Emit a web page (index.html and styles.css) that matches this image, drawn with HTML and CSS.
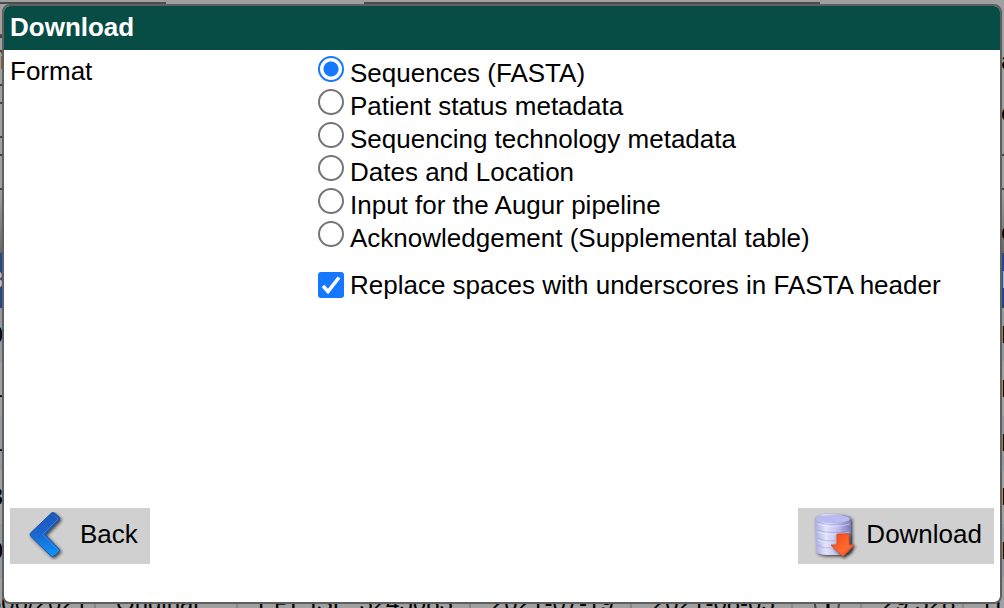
FILE: index.html
```html
<!DOCTYPE html>
<html lang="en">
<head>
<meta charset="utf-8">
<title>Download</title>
<link rel="stylesheet" href="styles.css">
</head>
<body>
<div class="backdrop" aria-hidden="true">
  <div class="filters">
    <div class="filter-top"><span class="field field-small"></span><span class="field field-wide"></span></div>
    <div class="line line-low left"></div>
    <div class="line left"><span>i</span><span>a</span></div>
    <div class="line line-mid left"></div>
    <div class="line left"><span></span><span>c</span></div>
    <div class="line line-mid left"></div>
    <div class="line"></div>
    <div class="heading"><span></span><span>c</span></div>
  </div>
  <div class="row selected"><span>3</span><span>L</span></div>
  <div class="row"><span>0</span><span>H</span></div>
  <div class="row"><span>1</span><span>H</span></div>
  <div class="row"><span>1</span><span>H</span></div>
  <div class="row"><span>3</span><span>H</span></div>
  <div class="row"><span>0</span><span>H</span></div>
  <div class="cells">
    <span class="cell name">606/2021</span>
    <span class="cell">Original</span>
    <span class="cell">EPI_ISL_3245083</span>
    <span class="cell">2021-07-19</span>
    <span class="cell">2021-08-05</span>
    <span class="cell info"><svg width="28" height="28" viewBox="0 0 28 28"><circle cx="14" cy="14" r="12" fill="none" stroke="#444" stroke-width="2"/><path d="M11 12h4v9M14 6v3" fill="none" stroke="#000" stroke-width="3"/></svg></span>
    <span class="cell">29,528</span>
    <span class="cell">H</span>
  </div>
</div>

<form class="dialog" role="dialog" aria-labelledby="title">
  <h1 class="title" id="title">Download</h1>
  <div class="body">
    <div class="caption" id="format">Format</div>
    <div class="options">
      <div class="choices" role="radiogroup" aria-labelledby="format">
        <label class="choice"><input class="radio" type="radio" name="format" checked>Sequences (FASTA)</label>
        <label class="choice"><input class="radio" type="radio" name="format">Patient status metadata</label>
        <label class="choice"><input class="radio" type="radio" name="format">Sequencing technology metadata</label>
        <label class="choice"><input class="radio" type="radio" name="format">Dates and Location</label>
        <label class="choice"><input class="radio" type="radio" name="format">Input for the Augur pipeline</label>
        <label class="choice"><input class="radio" type="radio" name="format">Acknowledgement (Supplemental table)</label>
      </div>
      <label class="replace">
        <span class="tick"><input class="check" type="checkbox" checked><svg class="mark" viewBox="0 0 26 26"><path d="M5 14l5 5.500L21 5.500" fill="none" stroke="#fff" stroke-width="3.600"/></svg></span>Replace spaces with underscores in FASTA header
      </label>
    </div>
  </div>
  <div class="actions">
    <button class="button" type="button">
      <svg class="icon" width="48" height="48" viewBox="0 0 48 48">
        <defs>
          <linearGradient id="blue" x1="0" y1="0" x2="0" y2="1"><stop offset="0" stop-color="#1a55b8"/><stop offset=".5" stop-color="#1b66d0"/><stop offset="1" stop-color="#0a98fb"/></linearGradient>
          <filter id="shadow" x="-30%" y="-30%" width="160%" height="160%"><feDropShadow dx="1.500" dy="1.500" stdDeviation="1.500" flood-color="#222" flood-opacity=".8"/></filter>
        </defs>
        <path d="M29.500 1Q31 0 32.500 1L37.500 5.500Q38 7 37 8L23 22.500 37 37Q38 38.500 37 39.500L32 44Q30.500 45 29 44L8.500 24Q7.500 22.500 8.500 21z" fill="url(#blue)" stroke="#1b57ac" stroke-width="1" stroke-linejoin="round" filter="url(#shadow)"/>
        <path d="M31 2.500L36 7 20.500 22.500 36 38" fill="none" stroke="#5c92df" stroke-width="1" opacity=".5"/>
      </svg>
      <span class="label">Back</span>
    </button>
    <button class="button compact" type="submit">
      <svg class="icon" width="48" height="48" viewBox="0 0 48 48">
        <defs>
          <linearGradient id="disk"><stop offset="0" stop-color="#a9abdf"/><stop offset=".3" stop-color="#e3e4fc"/><stop offset=".65" stop-color="#bcbdee"/><stop offset="1" stop-color="#7676b6"/></linearGradient>
          <linearGradient id="orange" x1="0" y1="0" x2="1" y2="1"><stop offset="0" stop-color="#f8420e"/><stop offset=".6" stop-color="#ff6a32"/><stop offset="1" stop-color="#e54c1c"/></linearGradient>
        </defs>
        <path d="M5 7Q5 2 22 2T41 7V37Q40 43 22 43T6 37z" fill="url(#disk)" filter="url(#shadow)"/>
        <ellipse cx="23" cy="7" rx="17" ry="4" fill="#b9baee"/>
        <path d="M7 10q16 5 33 0M7 18q16 5 33 0M7 26q10 4 18 3M7 33q8 4 14 3" fill="none" stroke="#9698cf" stroke-width="1" opacity=".5"/>
        <path d="M7 12q16 5 33 0M7 20q16 5 33 0M7 28q8 3 14 3" fill="none" stroke="#eff0ff" stroke-width="1" opacity=".5"/>
        <path d="M27 22h12v11h5L33 44.500 21 33h6z" fill="url(#orange)" stroke="#dc5028" stroke-width="1" filter="url(#shadow)"/>
      </svg>
      <span class="label">Download</span>
    </button>
  </div>
</form>
</body>
</html>
```
FILE: styles.css
```css
* { box-sizing: border-box; }
body {
  margin: 0;
  height: 100vh;
  overflow: hidden;
  position: relative;
  font: 26px/30px "Liberation Sans", Arial, sans-serif;
  color: #000;
  background: #a0a0a0;
}

.backdrop { height: 100%; overflow: hidden; font-size: 24px; }
.filters { height: 253px; display: flex; flex-direction: column; }
.filter-top { display: flex; height: 36px; padding-top: 2px; flex: none; }
.field { border: 2px solid #4c4c4c; border-left: 0; }
.field-small { width: 166px; }
.field-wide { width: 456px; margin-left: 198px; border-left: 2px solid #4c4c4c; }
.line, .heading { display: flex; justify-content: space-between; flex: none; }
.line { height: 34px; border-top: 2px solid #444; line-height: 18px; }
.line.left { border-image: linear-gradient(to right, #444 50%, #a0a0a0 50%) 2; }
.line-low { height: 14px; }
.line-mid { height: 18px; }
.heading { flex: 1; min-height: 0; line-height: 84px; background: linear-gradient(#a0a0a0, #666); border-top: 2px solid #444; }
.line span:last-child, .heading span:last-child { width: 3px; }

.row {
  display: flex;
  justify-content: space-between;
  height: 54px;
  line-height: 54px;
  background: #a0a0a0;
}
.row:nth-child(odd) { background: #92999f; }
.row > span:first-child { width: 3px; display: flex; justify-content: flex-end; }
.row > span:last-child { width: 3px; }
.row.selected { background: #24468a; color: #bbb; height: 55px; }

.cells {
  display: grid;
  grid-template-columns: 94px 142px 233px 161px 161px 69px 102px 1fr;
  height: 54px;
  line-height: 50px;
}
.cell { padding-left: 20px; border-left: 2px solid #888; }
.name { display: flex; justify-content: flex-end; padding: 0 6px 0 0; border: 0; }
.info { padding-top: 12px; line-height: 0; }

.dialog {
  position: absolute;
  inset: 4px 2px;
  display: flex;
  flex-direction: column;
  background: #fff;
  border: 2px solid #606060;
  border-radius: 8px;
  overflow: hidden;
}
.title {
  margin: 0;
  padding: 6px 6px 8px;
  font-size: 26px;
  line-height: 30px;
  color: #fff;
  background: #074d45;
}
.body { flex: 1; display: grid; grid-template-columns: 308px 1fr; padding: 6px; }
.options { display: flex; flex-direction: column; gap: 16px; }
.choice { display: flex; gap: 6px; height: 33px; line-height: 34px; }
.radio, .check { appearance: none; margin: 0; width: 26px; height: 26px; flex: none; }
.radio { border: 2px solid #767676; border-radius: 50%; background: #fff; }
.radio:checked { border-color: #1677ff; background: radial-gradient(#1677ff 7px, #fff 8px); }
.replace { display: flex; gap: 6px; line-height: 30px; align-items: center; }
.tick { display: grid; width: 26px; height: 26px; flex: none; }
.tick > * { grid-area: 1 / 1; }
.check { border-radius: 3px; background: #1677ff; }
.mark { visibility: hidden; width: 26px; height: 26px; pointer-events: none; }
.check:checked + .mark { visibility: visible; }

.actions { display: flex; justify-content: space-between; padding: 0 6px 38px; }
.button {
  display: flex;
  align-items: center;
  gap: 10px;
  height: 56px;
  padding: 0 12px;
  border: 0;
  background: #d0d0d0;
  font: inherit;
  color: #000;
}
.compact { gap: 8px; }
.label { padding-bottom: 4px; }
.icon { display: block; }
```
